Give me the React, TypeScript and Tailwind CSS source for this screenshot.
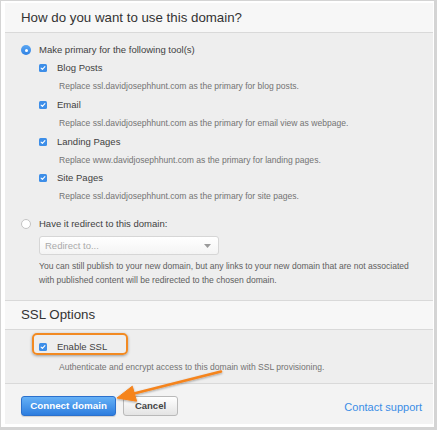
import React from 'react';

const font = { fontFamily: '"Liberation Sans", Arial, Helvetica, sans-serif' };

function Check() {
  return (
    <span className="flex h-[8px] w-[8px] shrink-0 items-center justify-center rounded-[1.5px] bg-[#3d8ee8]">
      <svg width="8" height="8" viewBox="0 0 8 8">
        <path d="M2.1 4.1 L3.4 5.4 L5.9 2.6" fill="none" stroke="#fff" strokeWidth="1.1" strokeLinecap="round" strokeLinejoin="round" />
      </svg>
    </span>
  );
}

function Radio({ on }: { on?: boolean }) {
  if (on) {
    return (
      <span className="flex h-[10px] w-[10px] shrink-0 items-center justify-center rounded-full bg-gradient-to-b from-[#5aa6f2] to-[#2f82e4]">
        <span className="h-[3px] w-[3px] rounded-full bg-white" />
      </span>
    );
  }
  return <span className="h-[10px] w-[10px] shrink-0 rounded-full border border-[#c4c4c4] bg-white" />;
}

const tools = [
  { name: 'Blog Posts', desc: 'Replace ssl.davidjosephhunt.com as the primary for blog posts.' },
  { name: 'Email', desc: 'Replace ssl.davidjosephhunt.com as the primary for email view as webpage.' },
  { name: 'Landing Pages', desc: 'Replace www.davidjosephhunt.com as the primary for landing pages.' },
  { name: 'Site Pages', desc: 'Replace ssl.davidjosephhunt.com as the primary for site pages.' },
];

export default function App() {
  return (
    <div className="relative h-[430px] w-[437px] overflow-hidden bg-[#d4d4d4] pl-[1px] pt-[1px]" style={font}>
      <div className="h-[426px] w-[433px] bg-white pl-[4px] pr-[1px] pt-[2px]">
        <div className="flex h-[421px] flex-col">
          {/* header */}
          <div className="flex h-[30px] items-center border-b border-[#d9d9d9] bg-[#f7f7f7] pl-[16px] text-[13.3px] text-[#333]">
            How do you want to use this domain?
          </div>

          {/* body */}
          <div className="h-[267px] bg-[#eeeeee] pl-[16px] pt-[8px]">
            <div className="flex h-[18.3px] items-center gap-[8px] text-[9.5px] text-[#3f3f3f]">
              <Radio on />
              <span>Make primary for the following tool(s)</span>
            </div>
            <div className="pl-[18px]">
              {tools.map(t => (
                <div key={t.name}>
                  <div className="flex h-[18.3px] items-center gap-[10px] text-[9.5px] text-[#3f3f3f]">
                    <Check />
                    <span>{t.name}</span>
                  </div>
                  <div className="flex h-[18.3px] items-center pl-[20px] text-[8.55px] text-[#737373]">{t.desc}</div>
                </div>
              ))}
            </div>

            <div className="mt-[9.3px] flex h-[18.3px] items-center gap-[8px] text-[9.5px] text-[#3f3f3f]">
              <Radio />
              <span>Have it redirect to this domain:</span>
            </div>
            <div className="pl-[18px]">
              <div className="mt-[3px] flex h-[19px] w-[180px] items-center justify-between rounded-[3px] border border-[#d6d6d6] bg-gradient-to-b from-white to-[#f4f4f4] pl-[5px] pr-[7px] text-[9.5px] text-[#aaa]">
                <span>Redirect to...</span>
                <svg width="7" height="4" viewBox="0 0 7 4">
                  <path d="M0 0 H7 L3.5 4 Z" fill="#9a9a9a" />
                </svg>
              </div>
              <p className="mt-[5px] whitespace-nowrap text-[8.55px] leading-[13.3px] text-[#606060]">
                You can still publish to your new domain, but any links to your new domain that are not associated
                <br />
                with published content will be redirected to the chosen domain.
              </p>
            </div>
          </div>

          {/* ssl header */}
          <div className="flex h-[30px] items-center border-y border-[#d9d9d9] bg-[#f7f7f7] pl-[16px] text-[13.3px] text-[#333]">
            SSL Options
          </div>

          {/* ssl body */}
          <div className="h-[54px] border-b border-[#d9d9d9] bg-[#eeeeee] pl-[34px] pt-[8px]">
            <div className="flex h-[18.3px] items-center gap-[10px] text-[9.5px] text-[#3f3f3f]">
              <Check />
              <span>Enable SSL</span>
            </div>
            <div className="mt-[1.7px] flex h-[18.3px] items-center pl-[20px] text-[8.55px] text-[#737373]">
              Authenticate and encrypt access to this domain with SSL provisioning.
            </div>
          </div>

          {/* footer */}
          <div className="flex flex-1 items-start justify-between bg-[#f3f3f3] pl-[16px] pr-[11px] pt-[12px]">
            <div className="flex gap-[7px]">
              <button className="flex h-[20px] w-[95px] items-center justify-center rounded-[3px] border border-[#2b70cc] bg-gradient-to-b from-[#66b1f6] to-[#2c7ddf] text-[9.8px] font-bold text-white shadow-[0_1px_1px_rgba(0,0,0,0.15)]">
                Connect domain
              </button>
              <button className="flex h-[20px] w-[55px] items-center justify-center rounded-[3px] border border-[#b9b9b9] bg-gradient-to-b from-white to-[#e4e4e4] text-[9.5px] font-bold text-[#444]">
                Cancel
              </button>
            </div>
            <span className="mt-[3px] text-[11px] text-[#3a8de6]">Contact support</span>
          </div>
        </div>
      </div>

      {/* annotation: highlight box */}
      <div className="absolute left-[32px] top-[333px] h-[22px] w-[96px] rounded-[5px] border-2 border-[#f28a22] shadow-[0_1px_3px_rgba(0,0,0,0.35)]" />

      {/* annotation: arrow */}
      <svg className="absolute left-0 top-0" width="437" height="430" viewBox="0 0 437 430">
        <defs>
          <filter id="sh" x="-10%" y="-30%" width="120%" height="160%">
            <feDropShadow dx="0" dy="1" stdDeviation="0.8" floodColor="#000" floodOpacity="0.35" />
          </filter>
        </defs>
        <g filter="url(#sh)" fill="#f5841f" stroke="#f5841f">
          <line x1="221" y1="371.5" x2="133" y2="393.8" strokeWidth="2.6" strokeLinecap="round" />
          <path d="M117 398 L132.3 386.2 L136.6 401.2 Z" strokeWidth="1" strokeLinejoin="round" />
        </g>
      </svg>
    </div>
  );
}
